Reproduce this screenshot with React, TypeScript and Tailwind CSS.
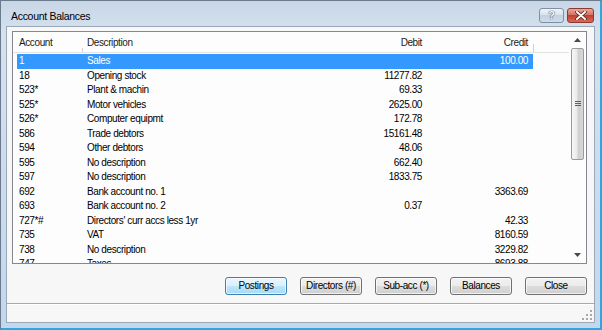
import React from "react";

type Row = [string, string, string, string];

const rows: Row[] = [
  ["1", "Sales", "", "100.00"],
  ["18", "Opening stock", "11277.82", ""],
  ["523*", "Plant & machin", "69.33", ""],
  ["525*", "Motor vehicles", "2625.00", ""],
  ["526*", "Computer equipmt", "172.78", ""],
  ["586", "Trade debtors", "15161.48", ""],
  ["594", "Other debtors", "48.06", ""],
  ["595", "No description", "662.40", ""],
  ["597", "No description", "1833.75", ""],
  ["692", "Bank account no. 1", "", "3363.69"],
  ["693", "Bank account no. 2", "0.37", ""],
  ["727*#", "Directors' curr accs less 1yr", "", "42.33"],
  ["735", "VAT", "", "8160.59"],
  ["738", "No description", "", "3229.82"],
  ["747", "Taxes", "", "8693.88"],
];

const buttons = ["Postings", "Directors (#)", "Sub-acc (*)", "Balances", "Close"];

const cols = "grid grid-cols-[65px_218px_127px_106px] w-[516px]";

function Arrow({ down }: { down?: boolean }) {
  return (
    <svg width="7" height="4" viewBox="0 0 7 4">
      <path d={down ? "M0 0H7L3.5 4Z" : "M3.5 0L7 4H0Z"} fill="#4a4a4a" />
    </svg>
  );
}

function ScrollBar() {
  return (
    <div className="w-[17px] flex flex-col">
      <div className="h-[16px] flex items-center justify-center">
        <Arrow />
      </div>
      <div className="h-[112px] mx-[2px] border border-[#9a9a9a] rounded-[2px] bg-[linear-gradient(to_right,#f6f6f6,#ececec_40%,#cfcfcf_60%,#d8d8d8)] flex items-center justify-center">
        <svg width="6" height="6" viewBox="0 0 6 6">
          <path d="M0 0.5H6M0 2.5H6M0 4.5H6" stroke="#5f5f5f" strokeWidth="1" />
        </svg>
      </div>
      <div className="flex-1" />
      <div className="h-[16px] flex items-center justify-center">
        <Arrow down />
      </div>
    </div>
  );
}

function ListView() {
  return (
    <div className="ml-[5px] mt-[4px] w-[575px] h-[233px] border border-[#828790] bg-[#fdfdfd] flex overflow-hidden">
      <div className="flex-1 flex flex-col">
        <div className="h-[21px] border-b border-[#e2e2e2] pl-[4px] relative">
          <div className={`${cols} text-[#1b1b1b] pt-[2px] leading-[18px]`}>
            <div className="pl-[2px]">Account</div>
            <div className="pl-[5px]">Description</div>
            <div className="text-right pr-[5px]">Debit</div>
            <div className="text-right pr-[5px]">Credit</div>
          </div>
          <div className="absolute left-[69px] bottom-0 w-px h-[4px] bg-[#d0d0d0]" />
          <div className="absolute left-[520px] bottom-0 w-px h-[8px] bg-[#d0d0d0]" />
        </div>
        <div className="pl-[4px] pt-[1px] leading-[14.5px] text-black">
          {rows.map((r, i) => (
            <div
              key={r[0]}
              className={`${cols} h-[14.5px] ${i === 0 ? "bg-[#3399ff] text-white" : ""}`}
            >
              <div className="pl-[2px]">{r[0]}</div>
              <div className="pl-[5px] whitespace-nowrap">{r[1]}</div>
              <div className="text-right pr-[5px]">{r[2]}</div>
              <div className="text-right pr-[5px]">{r[3]}</div>
            </div>
          ))}
        </div>
      </div>
      <ScrollBar />
    </div>
  );
}

function Button({ label, primary }: { label: string; primary?: boolean }) {
  return (
    <div
      className={`w-[62px] h-[18px] rounded-[3px] border flex items-center justify-center leading-[16px] text-black shadow-[inset_0_0_0_1px_rgba(255,255,255,0.7)] ${
        primary
          ? "border-[#3c7fb1] bg-[linear-gradient(to_bottom,#eaf6fd,#d9f0fc_50%,#bee6fd_50%,#a7d9f5)]"
          : "border-[#707070] bg-[linear-gradient(to_bottom,#f2f2f2,#ebebeb_50%,#dddddd_50%,#cfcfcf)]"
      }`}
    >
      {label}
    </div>
  );
}

export default function App() {
  return (
    <div className="w-[602px] h-[330px] flex flex-col border-l border-t border-[#6b7a8c] border-r-2 border-b-2 border-r-[#2ea6e2] border-b-[#2ea6e2] bg-[linear-gradient(to_bottom,#c8d6e6,#d5e1ee_10%,#c3d7ed)] font-['Liberation_Sans',Arial,sans-serif] text-[10px] tracking-[-0.4px] overflow-hidden">
      {/* Title bar */}
      <div className="h-[25px] flex items-start justify-between pl-[10px] pr-[6px]">
        <span className="mt-[9px] leading-[12px] text-[10.5px] tracking-[-0.3px] text-black">Account Balances</span>
        <div className="flex gap-[3px] mt-[7px]">
          <div className="w-[25px] h-[15px] rounded-[3px] border border-[#7f8fa4] bg-[linear-gradient(to_bottom,#eef3f9,#d8e2ee_45%,#c3d2e3_50%,#cfdbe9)] flex items-center justify-center">
            <span className="text-white font-bold text-[11px] leading-[11px] [text-shadow:0_0_1px_#2b3a4c,0_0_1px_#2b3a4c]">?</span>
          </div>
          <div className="w-[27px] h-[15px] rounded-[3px] border border-[#8b3a31] bg-[linear-gradient(to_bottom,#e8a79d,#d67263_45%,#c2402f_50%,#d66a57)] flex items-center justify-center">
            <svg width="12" height="9" viewBox="0 0 12 9">
              <path d="M2 1L10 8M10 1L2 8" stroke="#4a1f1a" strokeWidth="3.4" strokeLinecap="round" />
              <path d="M2 1L10 8M10 1L2 8" stroke="#ffffff" strokeWidth="2" strokeLinecap="round" />
            </svg>
          </div>
        </div>
      </div>

      {/* Client area */}
      <div className="mx-[5px] mb-[5px] flex-1 border border-[#9aa8b8] bg-[#f7f7f7] flex flex-col">
        <ListView />
        <div className="mt-[13px] pr-[7px] flex justify-end gap-[13px]">
          {buttons.map((b, i) => (
            <Button key={b} label={b} primary={i === 0} />
          ))}
        </div>
        <div className="mt-[8px] h-px bg-[#a9a9a9]" />
        <div className="flex-1 flex items-end justify-end pr-[2px] pb-[2px] border-t border-white">
          <svg width="10" height="10" viewBox="0 0 10 10">
            {[
              [8, 0],
              [8, 4],
              [4, 4],
              [8, 8],
              [4, 8],
              [0, 8],
            ].map(([x, y]) => (
              <rect key={`${x}-${y}`} x={x} y={y} width="2" height="2" fill="#a8a8a8" />
            ))}
          </svg>
        </div>
      </div>
    </div>
  );
}
